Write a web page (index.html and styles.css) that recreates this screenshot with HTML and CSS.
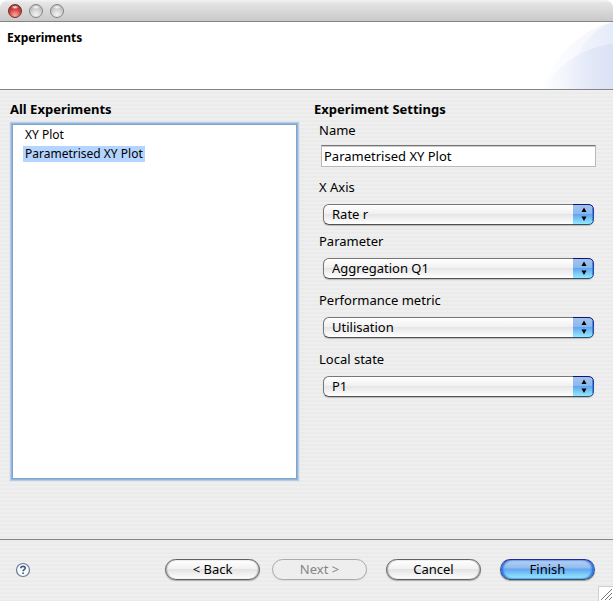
FILE: index.html
```html
<!DOCTYPE html>
<html lang="en">
<head>
<meta charset="utf-8">
<title>Experiments</title>
<link rel="stylesheet" href="styles.css">
</head>
<body>
<svg class="defs" width="0" height="0" aria-hidden="true">
  <defs>
    <linearGradient id="cap" x1="0" y1="0" x2="0" y2="1">
      <stop offset="0" stop-color="#a5c4ea"/><stop offset=".45" stop-color="#8bb8ee"/>
      <stop offset=".5" stop-color="#62a5f0"/><stop offset="1" stop-color="#98f2ff"/>
    </linearGradient>
    <linearGradient id="rim" x1="0" y1="0" x2="0" y2="1">
      <stop offset="0" stop-color="#14107c"/><stop offset=".5" stop-color="#1d50b4"/><stop offset="1" stop-color="#33506a"/>
    </linearGradient>
    <symbol id="stepper" viewBox="0 0 21 21">
      <path d="M0 0H15Q21 0 21 6V15Q21 21 15 21H0Z" fill="url(#cap)"/>
      <path d="M0 .5H15Q20.500 .5 20.500 6V15Q20.500 20.500 15 20.500H0" fill="none" stroke="url(#rim)"/>
      <path d="M19.500 4V17" stroke="#2a62d0" stroke-opacity=".6"/>
      <path d="M8.500 8H13.500L11 3.500ZM8.500 12.500H13.500L11 17Z" fill="#000"/>
    </symbol>
  </defs>
</svg>
<div class="window">
  <div class="titlebar">
    <button class="light light-close" type="button" aria-label="Close"></button>
    <button class="light" type="button" aria-label="Minimise"></button>
    <button class="light" type="button" aria-label="Zoom"></button>
  </div>
  <header class="banner">
    <h1>Experiments</h1>
    <svg class="swoosh" viewBox="0 0 75 67" aria-hidden="true">
      <defs>
        <linearGradient id="fade"><stop offset="0" stop-color="#d9e1f6" stop-opacity="0"/><stop offset="1" stop-color="#d9e1f6" stop-opacity=".65"/></linearGradient>
        <linearGradient id="fade2"><stop offset="0" stop-color="#d3dcf4" stop-opacity="0"/><stop offset="1" stop-color="#d3dcf4" stop-opacity=".6"/></linearGradient>
      </defs>
      <path d="M2 67C16 36 42 7 75 0V67Z" fill="url(#fade)" opacity=".6"/>
      <path d="M26 67C32 38 48 10 75 0V67Z" fill="url(#fade)" opacity=".7"/>
      <path d="M4 67C22 40 49 24 75 22V67Z" fill="url(#fade2)"/>
    </svg>
  </header>
  <form class="wizard">
    <main class="content">
      <section class="pane">
        <h2>All Experiments</h2>
        <ul class="list" role="listbox" aria-label="All Experiments" tabindex="0">
          <li role="option"><span>XY Plot</span></li>
          <li role="option" aria-selected="true"><span class="selected">Parametrised XY Plot</span></li>
        </ul>
      </section>
      <section class="pane">
        <h2>Experiment Settings</h2>
        <div class="field field-text">
          <label for="name">Name</label>
          <input id="name" type="text" value="Parametrised XY Plot">
        </div>
        <div class="field field-tight">
          <label for="axis">X Axis</label>
          <div class="popup"><select id="axis"><option>Rate r</option></select><svg aria-hidden="true"><use href="#stepper"/></svg></div>
        </div>
        <div class="field">
          <label for="parameter">Parameter</label>
          <div class="popup"><select id="parameter"><option>Aggregation Q1</option></select><svg aria-hidden="true"><use href="#stepper"/></svg></div>
        </div>
        <div class="field">
          <label for="metric">Performance metric</label>
          <div class="popup"><select id="metric"><option>Utilisation</option></select><svg aria-hidden="true"><use href="#stepper"/></svg></div>
        </div>
        <div class="field">
          <label for="state">Local state</label>
          <div class="popup"><select id="state"><option>P1</option></select><svg aria-hidden="true"><use href="#stepper"/></svg></div>
        </div>
      </section>
    </main>
    <footer class="actions">
      <button class="help" type="button" aria-label="Help">
        <svg viewBox="0 0 16 16" aria-hidden="true">
          <circle cx="8" cy="8" r="6.500" fill="#f8fafc" stroke="#667b9b" stroke-width="1.200"/>
          <path d="M5.800 6.200C5.800 3.600 10.300 3.700 10.200 6.200C10.100 7.700 8.100 7.700 8.100 9.300M8.100 10.500V12" fill="none" stroke="#415d87" stroke-width="1.700"/>
        </svg>
      </button>
      <div class="steps">
        <button class="push" type="button">&lt; Back</button>
        <button class="push" type="button" disabled>Next &gt;</button>
      </div>
      <button class="push" type="button">Cancel</button>
      <button class="push push-default" type="submit">Finish</button>
    </footer>
  </form>
  <svg class="grip" viewBox="0 0 15 15" aria-hidden="true">
    <path d="M0 0H15V15H0Z" fill="#fff"/>
    <path d="M0 15V.5H15M.5 0V15" fill="none" stroke="#cfcfcf"/>
    <path d="M3 14L14 3M7 14L14 7M11 14L14 11" stroke="#777" fill="none"/>
  </svg>
</div>
</body>
</html>
```

FILE: styles.css
```css
* { box-sizing: border-box; }

body {
  margin: 0;
  background: #fff;
  color: #000;
  font: 13px/18px "Lucida Grande", "Noto Sans", "Open Sans", sans-serif;
}

.defs { position: absolute; }

h1, h2 { margin: 0; font-weight: bold; }
h1 { font-size: 12px; line-height: 16px; }
h2 { font-size: 13px; line-height: 18px; }

button, input, select { font: inherit; color: inherit; margin: 0; }

.window {
  position: relative;
  display: flex;
  flex-direction: column;
  min-height: 100vh;
}

.titlebar {
  display: flex;
  align-items: center;
  gap: 7px;
  height: 22px;
  padding: 0 8px;
  border-bottom: 1px solid #858585;
  border-radius: 8px 8px 0 0;
  background: linear-gradient(#f4f4f4, #e4e4e4 15%, #c9c9c9);
}

.light {
  width: 14px;
  height: 14px;
  padding: 0;
  border: 1px solid #858585;
  border-radius: 50%;
  background:
    radial-gradient(ellipse 4px 2px at 50% 18%, #fff, transparent),
    radial-gradient(circle at 50% 80%, #f4f4f4, #bcbcbc 75%);
}

.light-close {
  border-color: #6e2c2c;
  background:
    radial-gradient(ellipse 4px 2px at 50% 18%, #fff, transparent),
    radial-gradient(circle at 50% 85%, #ffaaa0, #d34640 50%, #8c1d1d);
}

.banner {
  display: flex;
  justify-content: space-between;
  height: 68px;
  padding-left: 7px;
  border-bottom: 1px solid #858585;
  background: #fff;
}

.banner h1 { padding-top: 8px; }
.swoosh { width: 75px; height: 67px; }

.wizard {
  flex: 1;
  display: flex;
  flex-direction: column;
  background: repeating-linear-gradient(#efefef 0 2px, #ebebeb 2px 4px);
}

.content {
  flex: 1;
  display: grid;
  grid-template-columns: 288fr 282fr;
  gap: 16px;
  padding: 10px 17px 59px 10px;
}

.pane { display: flex; flex-direction: column; gap: 3px; min-width: 0; }

.list {
  flex: 1;
  margin: 3px 1px 1px 2px;
  padding: 0 12px;
  list-style: none;
  font-size: 12px;
  line-height: 19px;
  background: #fff;
  border: 1px solid #7fa5cc;
  box-shadow: 0 0 0 1px #91b7dc, 0 0 1px 2px #b5cee6;
  outline: none;
}

.list span { display: inline-block; line-height: 16px; padding: 0 2px; margin-left: -2px; }
.list .selected { background: #b4d5ff; }

.field { display: flex; flex-direction: column; gap: 8px; margin: 0 2px 9px 5px; }
.field-tight { margin-bottom: 4px; }
.field-text { gap: 6px; margin-right: 0; margin-bottom: 8px; }

.field input {
  width: auto;
  height: 22px;
  margin-left: 2px;
  padding: 0 2px;
  border: 1px solid #b9b9b9;
  border-top-color: #777;
  border-radius: 0;
  background: #fff;
  box-shadow: inset 0 1px #c8c8c8;
  outline: none;
}

.popup { position: relative; margin-left: 4px; height: 21px; }

.popup select {
  display: block;
  appearance: none;
  width: 100%;
  height: 21px;
  padding: 0 28px 2px 8px;
  border: 1px solid #777;
  border-bottom-color: #505050;
  border-radius: 6px;
  background: linear-gradient(#fff, #f1f1f1 45%, #e6e6e6 50%, #fff);
  box-shadow: 0 1px 1px #bbb;
}

.popup svg {
  position: absolute;
  top: 0;
  right: 0;
  width: 21px;
  height: 21px;
  pointer-events: none;
}

.actions {
  display: flex;
  align-items: center;
  gap: 19px;
  height: 62px;
  padding: 0 18px 2px 15px;
  border-top: 1px solid #858585;
}

.help { width: 16px; height: 16px; padding: 0; border: 0; background: none; margin-right: auto; }
.help svg { display: block; }
.steps { display: flex; gap: 12px; }

.push {
  width: 95px;
  height: 21px;
  padding: 0 0 2px;
  border: 1px solid #626262;
  border-radius: 11px;
  background: linear-gradient(#fff, #f2f2f2 45%, #e3e3e3 50%, #fff);
  box-shadow: 0 1px 1px #aaa, inset 1px 0 1px #aaa, inset -1px 0 1px #aaa;
}

.push:disabled { color: #858585; border-color: #aaa; background: #eee; box-shadow: 0 1px 1px #ddd; }

.push-default {
  border-color: #27279c #2456a8 #35526c;
  background: linear-gradient(#b8d2f0, #90bbee 42%, #61a5f1 48%, #98efff);
  box-shadow: 0 1px 1px #999, inset 2px 0 2px #2e70dc, inset -2px 0 2px #2e70dc;
}

.grip { position: absolute; right: 0; bottom: 0; width: 15px; height: 15px; }
```
